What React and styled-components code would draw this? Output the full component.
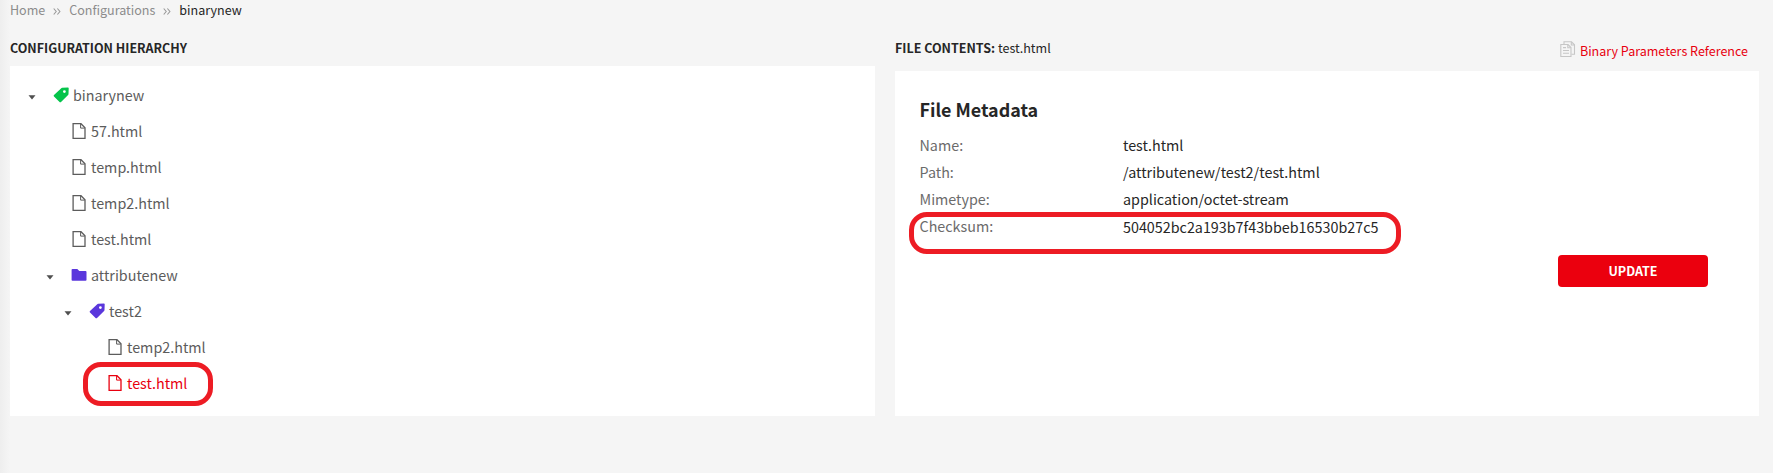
import React from 'react';
import styled, { createGlobalStyle, css } from 'styled-components';

const GlobalStyle = createGlobalStyle`
  * { box-sizing: border-box; }
  body {
    margin: 0;
    background: #f5f5f5;
    color: #262626;
    font-family: "Noto Sans CJK SC", "Noto Sans", sans-serif;
    font-size: 14.33px;
    line-height: 20px;
  }
`;

const Page = styled.div`
  height: 473px;
  padding-left: 10px;
  overflow: hidden;
  background: linear-gradient(to right, #eeeeee, #f5f5f5 10px);
`;

const Breadcrumbs = styled.nav`
  display: flex;
  height: 20px;
  font-size: 12.54px;
  color: #8c8c8c;
  white-space: pre;
`;

const Crumb = styled.span`
  color: ${(p) => (p.$current ? '#262626' : 'inherit')};
`;

const Separator = styled.svg`
  width: 8px;
  height: 7px;
  margin: 8px 8.5px 0 7.5px;
  fill: none;
  stroke: #999;
  stroke-width: 1.1;
`;

const Columns = styled.main`
  display: flex;
  gap: 20px;
`;

const Column = styled.section`
  width: ${(p) => p.$width}px;
  display: flex;
  flex-direction: column;
  height: 396px;
`;

const ColumnHeader = styled.header`
  display: flex;
  justify-content: space-between;
  height: ${(p) => p.$height}px;
  padding: 18px 11px 0 0;
  font-size: 12.52px;
  white-space: nowrap;
`;

const Panel = styled.div`
  flex: 1;
  background: #fff;
  padding: ${(p) => p.$padding};
`;

const RefLink = styled.a`
  display: flex;
  gap: 4px;
  padding-top: 3px;
  color: #e8000f;
`;

const Row = styled.div`
  position: relative;
  display: flex;
  align-items: center;
  height: 36px;
  padding-left: ${(p) => p.$level * 18}px;
  color: ${(p) => (p.$selected ? '#e8000f' : '#5c5c5c')};
`;

const ArrowSlot = styled.span`
  display: flex;
  width: 25px;
  padding-top: 5px;
`;

const IconSlot = styled.span`
  display: flex;
  width: 16px;
  margin-right: 4px;
`;

const ring = css`
  position: absolute;
  border: 5px solid #ed1c24;
  border-radius: 18px;
  pointer-events: none;
`;

const TreeRing = styled.span`
  ${ring}
  left: 55px;
  top: -3px;
  width: 130px;
  height: 44px;
`;

const ChecksumRing = styled.span`
  ${ring}
  left: -10.5px;
  top: 0;
  width: 492px;
  height: 42px;
`;

const Title = styled.h2`
  margin: 0 0 8px;
  font-size: 17.91px;
  line-height: 28px;
  font-weight: 700;
`;

const Field = styled.div`
  position: relative;
  display: flex;
  height: 27px;
  line-height: 27px;
`;

const Label = styled.span`
  width: 203.5px;
  color: #6b6b6b;
`;

const Value = styled.span`
  padding-top: ${(p) => p.$shift || 0}px;
`;

const UpdateButton = styled.button`
  display: block;
  margin: 16px 51px 0 auto;
  width: 150px;
  height: 32px;
  padding: 0;
  border: 0;
  border-radius: 4px;
  background: #eb000e;
  color: #fff;
  font: 700 12.54px/32px "Noto Sans CJK SC", sans-serif;
`;

const TagIcon = ({ color }) => (
  <svg width="16" height="16" viewBox="0 0 16 16">
    <path
      fill={color}
      fillRule="evenodd"
      d="M9.2.8 15 .6Q15.7.6 15.7 1.3L15.5 7Q15.5 7.5 15.1 7.9L8.3 14.8Q7.3 15.8 6.3 14.8L1 9.6Q.2 8.8 1 8L8 1.4Q8.5.8 9.2.8ZM11.4 3.2a1.4 1.4 0 1 0 0 2.8a1.4 1.4 0 0 0 0-2.8Z"
    />
  </svg>
);

const FileIcon = () => (
  <svg width="16" height="16" viewBox="0 0 16 16" fill="none" stroke="currentColor">
    <path strokeWidth="1.3" d="M2.1.7H10L14 4.7V15.3H2.1Z" />
    <path strokeWidth="1" d="M9.6 1V5.1H13.8" />
  </svg>
);

const FolderIcon = () => (
  <svg width="16" height="16" viewBox="0 0 16 16">
    <path fill="#5a37dc" d="M1.5 2H6.3L8.3 4H14.6Q15.5 4 15.5 4.9V13Q15.5 13.8 14.6 13.8H1.5Q.6 13.8.6 13V2.8Q.6 2 1.5 2Z" />
  </svg>
);

const Arrow = () => (
  <svg width="8" height="5" viewBox="0 0 8 5">
    <path fill="#4f4f4f" d="M.5.3H7.5L4 4.5Z" />
  </svg>
);

const CopyIcon = () => (
  <svg width="16" height="17" viewBox="0 0 16 17" fill="none" stroke="#c6c6c6" strokeWidth="1.1">
    <path d="M4 3V.8H11.5L14.5 3.8V13.2H11.5" />
    <path d="M11.3 1V4H14.3" />
    <path d="M.8 3.5H8L11 6.5V15.5H.8Z" />
    <path d="M7.8 3.7V6.7H10.8M3 6.6H6M3 9.5H9M3 12.3H9" />
  </svg>
);

const Chevrons = () => (
  <Separator viewBox="0 0 8 7">
    <path d="M.7.5 3.2 3.5.7 6.5M4.4.5 6.9 3.5 4.4 6.5" />
  </Separator>
);

const icons = {
  rootTag: <TagIcon color="#05c44b" />,
  tag: <TagIcon color="#5a37dc" />,
  folder: <FolderIcon />,
  file: <FileIcon />,
};

const tree = [
  { level: 0, icon: 'rootTag', name: 'binarynew', open: true },
  { level: 1, icon: 'file', name: '57.html' },
  { level: 1, icon: 'file', name: 'temp.html' },
  { level: 1, icon: 'file', name: 'temp2.html' },
  { level: 1, icon: 'file', name: 'test.html' },
  { level: 1, icon: 'folder', name: 'attributenew', open: true },
  { level: 2, icon: 'tag', name: 'test2', open: true },
  { level: 3, icon: 'file', name: 'temp2.html' },
  { level: 3, icon: 'file', name: 'test.html', selected: true },
];

const fields = [
  ['Name:', 'test.html'],
  ['Path:', '/attributenew/test2/test.html'],
  ['Mimetype:', 'application/octet-stream'],
  ['Checksum:', '504052bc2a193b7f43bbeb16530b27c5'],
];

export default function App() {
  return (
    <Page>
      <GlobalStyle />
      <Breadcrumbs>
        <Crumb>Home</Crumb>
        <Chevrons />
        <Crumb>Configurations</Crumb>
        <Chevrons />
        <Crumb $current>binarynew</Crumb>
      </Breadcrumbs>
      <Columns>
        <Column $width={865}>
          <ColumnHeader $height={46}>
            <b>CONFIGURATION HIERARCHY</b>
          </ColumnHeader>
          <Panel $padding="11px 18px">
            {tree.map((n, i) => (
              <Row key={i} $level={n.level} $selected={n.selected}>
                <ArrowSlot>{n.open && <Arrow />}</ArrowSlot>
                <IconSlot>{icons[n.icon]}</IconSlot>
                <span>{n.name}</span>
                {n.selected && <TreeRing />}
              </Row>
            ))}
          </Panel>
        </Column>
        <Column $width={864}>
          <ColumnHeader $height={51}>
            <span><b>FILE CONTENTS:</b> test.html</span>
            <RefLink><CopyIcon />Binary Parameters Reference</RefLink>
          </ColumnHeader>
          <Panel $padding="24px 0 0 24.5px">
            <Title>File Metadata</Title>
            {fields.map(([label, value]) => {
              const marked = label === 'Checksum:';
              return (
                <Field key={label}>
                  <Label>{label}</Label>
                  <Value $shift={marked ? 1 : 0}>{value}</Value>
                  {marked && <ChecksumRing />}
                </Field>
              );
            })}
            <UpdateButton>UPDATE</UpdateButton>
          </Panel>
        </Column>
      </Columns>
    </Page>
  );
}
